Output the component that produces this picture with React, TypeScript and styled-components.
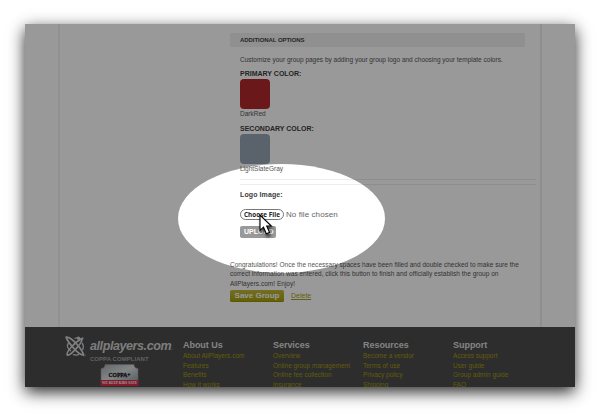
import React from "react";
import styled, { createGlobalStyle } from "styled-components";

const GlobalStyle = createGlobalStyle`
  * { box-sizing: border-box; }
  html, body { margin: 0; background: #fff; }
  body { font-family: "Liberation Sans", Arial, sans-serif; }
`;

const Stage = styled.div`
  width: 600px;
  height: 420px;
  padding: 24px 25px 33px;
  overflow: hidden;
  background: #fff;
`;

const Frame = styled.div`
  width: 550px;
  height: 363px;
  background: #fff;
  box-shadow: 0 5px 15px rgba(0, 0, 0, 0.85);
`;

const FrameClip = styled.div`
  position: relative;
  display: flex;
  flex-direction: column;
  height: 363px;
  overflow: hidden;
  background: #fff;
`;

const Sheet = styled.main`
  width: 484px;
  height: 303px;
  margin-left: 33px;
  padding: 9px 4px 0 170px;
  border-left: 2px solid #f2f2f2;
  border-right: 2px solid #ededed;
`;

const SectionBar = styled.h2`
  width: 295px;
  height: 14px;
  margin: 0 0 7px;
  padding-left: 10px;
  background: #f0f0f0;
  color: #414141;
  font-size: 6px;
  line-height: 14px;
  letter-spacing: -0.06px;
`;

const Fields = styled.div`
  padding-left: 10px;
`;

const Line = styled.p<{ $h?: number; $track?: number }>`
  margin: 0;
  height: ${(p) => p.$h ?? 10}px;
  color: #555;
  font-size: 6.5px;
  line-height: ${(p) => p.$h ?? 10}px;
  letter-spacing: ${(p) => p.$track ?? 0}px;
  white-space: nowrap;
`;

const Label = styled.h3<{ $top: number; $track?: number }>`
  height: 10px;
  margin: ${(p) => p.$top}px 0 0;
  color: #3c3c3c;
  font-size: 7px;
  line-height: 10px;
  letter-spacing: ${(p) => p.$track ?? 0}px;
  white-space: nowrap;
`;

const Swatch = styled.div<{ $color: string }>`
  width: 30px;
  height: 30px;
  border-radius: 4px;
  background: ${(p) => p.$color};
`;

const Rules = styled.div`
  width: 296px;
  height: 6px;
  margin-top: 5px;
  border-top: 1px solid #ededed;
  border-bottom: 1px solid #ededed;
`;

const FileRow = styled.div`
  display: flex;
  align-items: center;
  height: 11px;
  margin-top: 9px;
  color: #666;
  font-size: 8px;
  gap: 2px;
  white-space: nowrap;
`;

const ChooseButton = styled.button`
  width: 44px;
  height: 11px;
  padding: 0;
  border: 1px solid #777;
  border-radius: 6px;
  background: #fff;
  color: #222;
  font: bold 6.3px/8px "Open Sans", "Noto Sans", sans-serif;
  letter-spacing: 0.05px;
  white-space: nowrap;
`;

const FileStatus = styled.span`
  letter-spacing: 0.08px;
`;

const UploadButton = styled.button`
  display: block;
  width: 36px;
  height: 12px;
  margin: 6px 0 0;
  padding: 0 0 0 4px;
  border: 0;
  border-radius: 2px;
  background: #999;
  color: #fff;
  font: bold 7px/12px "Liberation Sans", sans-serif;
  text-align: left;
`;

const Finish = styled.div`
  margin-top: 21.5px;
`;

const Actions = styled.div`
  display: flex;
  align-items: center;
  gap: 7px;
  height: 13px;
  margin-top: 1px;
`;

const SaveButton = styled.button`
  width: 54px;
  height: 12px;
  padding: 0;
  border: 0;
  border-radius: 2px;
  background: linear-gradient(#c0b83c, #a69e08);
  box-shadow: inset 0 -1px #9b9300;
  color: #fff;
  font: bold 8px/11px "Liberation Sans", sans-serif;
  letter-spacing: 0;
  white-space: nowrap;
`;

const DeleteLink = styled.a`
  color: #a79f18;
  font-size: 7px;
  line-height: 12px;
  text-decoration: underline;
`;

const Footer = styled.footer`
  display: flex;
  height: 60px;
  padding-left: 40px;
  background: #4b4b4b;
`;

const Brand = styled.div`
  display: flex;
  align-items: flex-start;
  width: 118px;
  height: 60px;
  padding-top: 9px;
`;

const BrandText = styled.div`
  display: flex;
  flex-direction: column;
  margin: 1.5px 0 0 3px;
`;

const Wordmark = styled.div`
  display: flex;
  align-items: baseline;
  height: 16px;
  color: #d0d0d0;
  font: italic bold 12.5px/17px "Liberation Sans", sans-serif;
  letter-spacing: -0.41px;
  white-space: nowrap;
`;

const Period = styled.span`
  font-size: 6px;
  color: #aaa;
`;

const Compliant = styled.div`
  height: 9px;
  color: #a2a2a2;
  font-size: 6px;
  font-weight: bold;
  line-height: 10px;
  letter-spacing: 0.04px;
  white-space: nowrap;
`;

const Seal = styled.svg`
  display: block;
  margin: 1.5px 0 0 10px;
`;

const FooterColumn = styled.nav`
  display: flex;
  flex-direction: column;
  width: 90px;
  padding-top: 12px;
`;

const FooterTitle = styled.h4`
  height: 13.5px;
  margin: 0;
  color: #dcdcdc;
  font-size: 9px;
  line-height: 12px;
  letter-spacing: -0.04px;
  white-space: nowrap;
`;

const FooterLink = styled.a`
  height: 9.5px;
  color: #a39a12;
  font-size: 6.5px;
  line-height: 10px;
  white-space: nowrap;
`;

const Spotlight = styled.div`
  position: absolute;
  left: 153px;
  top: 140px;
  width: 207px;
  height: 109px;
  border-radius: 50%;
  box-shadow: 0 0 0 600px rgba(0, 0, 0, 0.4);
  pointer-events: none;
`;

const Pointer = styled.svg`
  position: absolute;
  left: 234px;
  top: 190px;
  overflow: visible;
  filter: drop-shadow(1px 3px 1.5px rgba(0, 0, 0, 0.6));
`;

const columns: { title: string; links: string[] }[] = [
  { title: "About Us", links: ["About AllPlayers.com", "Features", "Benefits", "How it works"] },
  { title: "Services", links: ["Overview", "Online group management", "Online fee collection", "Insurance"] },
  { title: "Resources", links: ["Become a vendor", "Terms of use", "Privacy policy", "Shipping"] },
  { title: "Support", links: ["Access support", "User guide", "Group admin guide", "FAQ"] },
];

const LogoMark = () => (
  <svg width="22" height="21" viewBox="0 0 22 21" fill="none" stroke="#d4d4d4">
    <path d="M1.200 1.200C5 .8 9 5 12.500 9S18 16 18.500 19.200C14 18.500 11 15 8 11.500S1.500 4 1.200 1.200Z" strokeWidth="1.800" />
    <path d="M17 2.500C12 5 8 9 5.500 12S1.200 17.500 2.200 19C5 20 10 14 13 10.500S17.500 5 17 2.500Z" strokeWidth="1.600" />
    <path d="M9.500 2.500L13 1.500M14.500 3.500L18.500 2M3.500 7C1 10 3 13 6 15M17 7c1.500 2 1.500 5 .5 7M8 18.300c2 1 4 1 6 0" strokeWidth="1.300" />
    <circle cx="13.500" cy="2.200" r="1.700" fill="#d4d4d4" stroke="none" />
    <circle cx="20.500" cy="19" r=".5" fill="#aaa" stroke="none" />
  </svg>
);

const CoppaSeal = () => (
  <Seal width="39" height="22" viewBox="0 0 39 22">
    <defs>
      <linearGradient id="silver" x1="0" y1="0" x2="1" y2="1">
        <stop offset="0" stopColor="#a5abb0" />
        <stop offset=".5" stopColor="#dadddf" />
        <stop offset="1" stopColor="#969ca0" />
      </linearGradient>
    </defs>
    <path d="M5 .5H34C34 3 35.500 4.500 38 4.500V18H1V4.500C3.500 4.500 5 3 5 .5Z" fill="url(#silver)" stroke="#8d9297" strokeWidth=".6" />
    <text x="8.500" y="13" textLength="22" lengthAdjust="spacingAndGlyphs" fontFamily="Liberation Serif, serif" fontWeight="bold" fontSize="6" fill="#171717" stroke="#171717" strokeWidth=".3">COPPA+</text>
    <rect x=".5" y="16" width="38" height="6" fill="#d9304a" />
    <text x="2" y="20.200" textLength="35" lengthAdjust="spacingAndGlyphs" fontFamily="Liberation Serif, serif" fontWeight="bold" fontSize="3.800" fill="#fff">WE KEEP KIDS SAFE</text>
  </Seal>
);

export default function App() {
  return (
    <>
      <GlobalStyle />
      <Stage>
        <Frame>
          <FrameClip>
            <Sheet>
              <SectionBar>ADDITIONAL OPTIONS</SectionBar>
              <Fields>
                <Line $h={11}>Customize your group pages by adding your group logo and choosing your template colors.</Line>
                <Label $top={4}>PRIMARY COLOR:</Label>
                <Swatch $color="#b2282d" />
                <Line>DarkRed</Line>
                <Label $top={5}>SECONDARY COLOR:</Label>
                <Swatch $color="#96a5b3" />
                <Line>LightSlateGray</Line>
                <Rules />
                <Label $top={5} $track={0.1}>Logo Image:</Label>
                <FileRow>
                  <ChooseButton>Choose File</ChooseButton>
                  <FileStatus>No file chosen</FileStatus>
                </FileRow>
                <UploadButton>UPLOAD</UploadButton>
              </Fields>
              <Finish>
                <Line $h={9.5} $track={0.02}>Congratulations! Once the necessary spaces have been filled and double checked to make sure the</Line>
                <Line $h={9.5} $track={0.02}>correct information was entered, click this button to finish and officially establish the group on</Line>
                <Line $h={9.5} $track={0.02}>AllPlayers.com! Enjoy!</Line>
                <Actions>
                  <SaveButton>Save Group</SaveButton>
                  <DeleteLink>Delete</DeleteLink>
                </Actions>
              </Finish>
            </Sheet>
            <Footer>
              <Brand>
                <LogoMark />
                <BrandText>
                  <Wordmark>allplayers.com<Period>.</Period></Wordmark>
                  <Compliant>COPPA COMPLIANT</Compliant>
                  <CoppaSeal />
                </BrandText>
              </Brand>
              {columns.map((col) => (
                <FooterColumn key={col.title}>
                  <FooterTitle>{col.title}</FooterTitle>
                  {col.links.map((text) => (
                    <FooterLink key={text}>{text}</FooterLink>
                  ))}
                </FooterColumn>
              ))}
            </Footer>
            <Spotlight />
            <Pointer width="14" height="22" viewBox="0 0 14 22">
              <path d="M1 1V16.500L4.500 13.200L7.300 19.800L10.500 18.400L7.700 12H12.300Z" fill="#fff" stroke="#000" strokeWidth="1.100" />
            </Pointer>
          </FrameClip>
        </Frame>
      </Stage>
    </>
  );
}
